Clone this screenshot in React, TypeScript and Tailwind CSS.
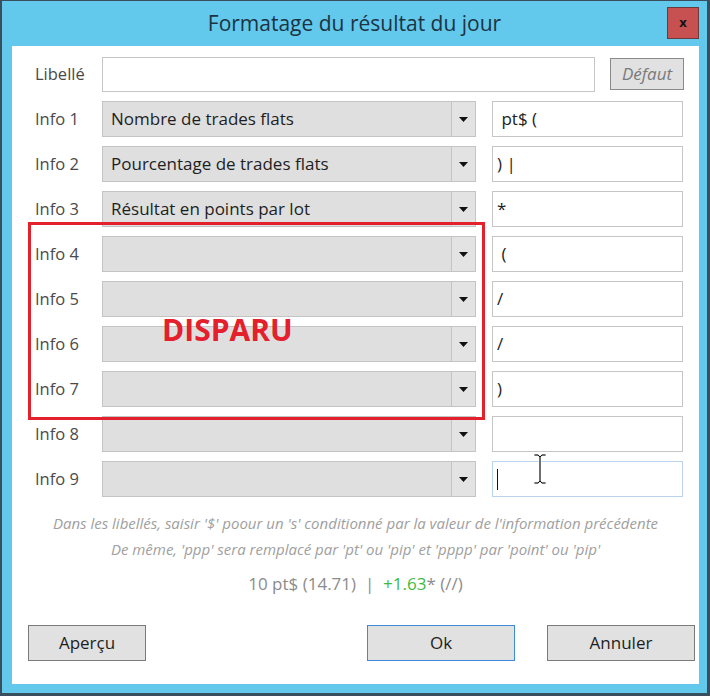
import React from "react";

const rows: { label: string; combo: string; text: string; focus?: boolean }[] = [
  { label: "Info 1", combo: "Nombre de trades flats", text: " pt$ (" },
  { label: "Info 2", combo: "Pourcentage de trades flats", text: ") |" },
  { label: "Info 3", combo: "Résultat en points par lot", text: "*" },
  { label: "Info 4", combo: "", text: " (" },
  { label: "Info 5", combo: "", text: "/" },
  { label: "Info 6", combo: "", text: "/" },
  { label: "Info 7", combo: "", text: ")" },
  { label: "Info 8", combo: "", text: "" },
  { label: "Info 9", combo: "", text: "", focus: true },
];

function Combo({ value }: { value: string }) {
  return (
    <div className="w-[374px] h-[36px] flex bg-[#dfdfdf] border border-[#c4c4c4]">
      <div className="flex-1 flex items-center pl-[8px] text-[17px] text-[#1e1e1e] whitespace-nowrap">{value}</div>
      <div className="w-[24px] h-full border-l border-[#c4c4c4] bg-[#e3e3e3] flex items-center justify-center">
        <svg width="9" height="5" viewBox="0 0 9 5">
          <polygon points="0,0 9,0 4.5,5" fill="#111" />
        </svg>
      </div>
    </div>
  );
}

export default function App() {
  return (
    <div
      className="w-[710px] h-[696px] bg-[#3a4f5e] pl-[2px] pr-[3px] pt-[1px] pb-[3px]"
      style={{ fontFamily: '"Open Sans", "Noto Sans", sans-serif' }}
    >
      <div className="w-full h-full bg-[#62c8ec] flex flex-col">
        <div className="relative h-[45px] flex items-center justify-center shrink-0">
          <div className="text-[21px] text-[#1c3442]">Formatage du résultat du jour</div>
          <div className="absolute right-[8px] top-[6px] w-[32px] h-[32px] bg-[#c75050] border border-[#6b3a3a] flex items-center justify-center">
            <span className="text-[13px] font-bold text-[#111] leading-none -mt-[2px]">x</span>
          </div>
        </div>
        <div className="relative flex-1 ml-[10px] mr-[8px] mb-[9px] bg-white flex flex-col">
          {/* Libellé row */}
          <div className="flex items-center mt-[10px] h-[36px]">
            <div className="w-[90px] pl-[23px] text-[16.5px] text-[#4a4a4a]">Libellé</div>
            <div className="w-[493px] h-[35px] border border-[#c6c6c6] bg-white" />
            <div className="ml-[15px] w-[74px] h-[32px] bg-[#e1e1e1] border border-[#8a8a8a] flex items-center justify-center italic text-[17px] text-[#7a7a7a]">
              Défaut
            </div>
          </div>
          <div className="flex flex-col gap-[9px] mt-[9px]">
            {rows.map((r) => (
              <div key={r.label} className="flex items-center h-[36px]">
                <div className="w-[90px] pl-[23px] text-[16.5px] text-[#4a4a4a]">{r.label}</div>
                <Combo value={r.combo} />
                <div
                  className={
                    r.focus
                      ? "ml-[16px] w-[191px] h-[36px] border border-[#b9d4ec] bg-white flex items-center pl-[4px] text-[17px] text-[#222] whitespace-pre"
                      : "ml-[16px] w-[191px] h-[36px] border border-[#c6c6c6] bg-white flex items-center pl-[4px] text-[17px] text-[#222] whitespace-pre"
                  }
                >
                  {r.focus ? <div className="w-[1px] h-[21px] bg-[#111]" /> : r.text}
                </div>
              </div>
            ))}
          </div>
          <div className="mt-[13px] text-center italic text-[15px] leading-[26px] text-[#a0a0a0]">
            <div>Dans les libellés, saisir '$' poour un 's' conditionné par la valeur de l'information précédente</div>
            <div>De même, 'ppp' sera remplacé par 'pt' ou 'pip' et 'pppp' par 'point' ou 'pip'</div>
          </div>
          <div className="mt-[10px] h-[24px] text-center text-[17px] leading-[24px] text-[#8c8c8c] whitespace-pre">
            10 pt$ (14.71)  |  <span className="text-[#3dbb3d]">+1.63</span>* (//)
          </div>
          <div className="mt-[29px] flex h-[36px]">
            <div className="ml-[16px] w-[118px] h-[36px] bg-[#e1e1e1] border border-[#7a7a7a] flex items-center justify-center text-[17px] text-[#1e1e1e]">
              Aperçu
            </div>
            <div className="ml-[221px] w-[148px] h-[36px] bg-[#e1e1e1] border border-[#3c8ad8] flex items-center justify-center text-[17px] text-[#1e1e1e]">
              Ok
            </div>
            <div className="ml-[32px] w-[148px] h-[36px] bg-[#e1e1e1] border border-[#7a7a7a] flex items-center justify-center text-[17px] text-[#1e1e1e]">
              Annuler
            </div>
          </div>

          {/* Red annotation box */}
          <div className="absolute left-[16px] top-[176px] w-[457px] h-[198px] border-[3px] border-[#e3202b]" />
          <div className="absolute left-[150px] top-[266px] text-[30px] font-bold text-[#e3202b] leading-[36px]">DISPARU</div>

          {/* Mouse I-beam cursor */}
          <svg className="absolute left-[520px] top-[407px]" width="16" height="32" viewBox="0 0 16 32">
            <path d="M2 1h4l2 2 2-2h4v2h-4l-1 1v24l1 1h4v2h-4l-2-2-2 2H2v-2h4l1-1V4L6 3H2z" fill="#111" stroke="#fff" strokeWidth="0.8" />
          </svg>
        </div>
      </div>
    </div>
  );
}
